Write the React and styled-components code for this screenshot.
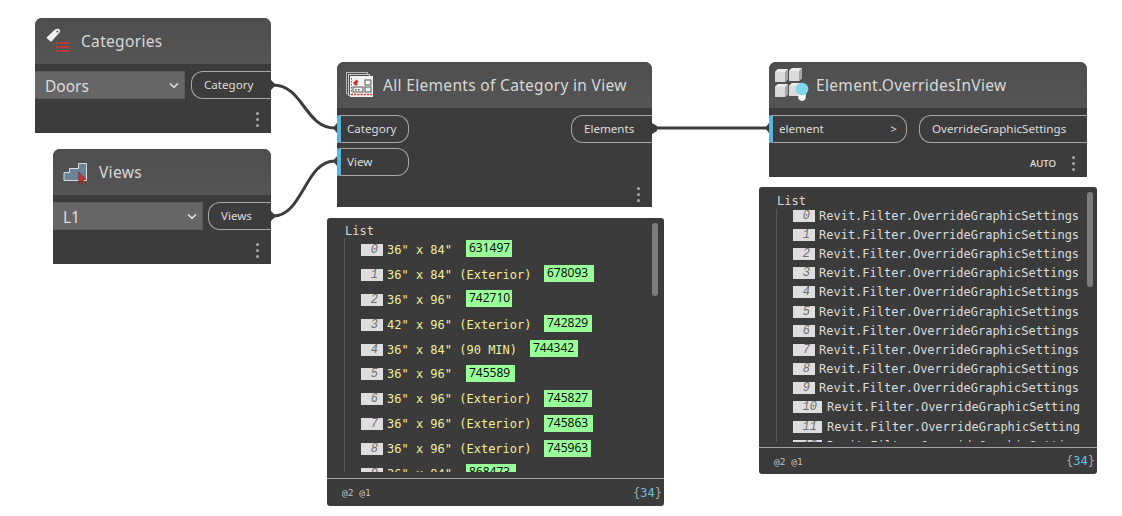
import React from "react";
import styled, { createGlobalStyle } from "styled-components";

const Global = createGlobalStyle`
  html, body { margin: 0; padding: 0; background: #fff; }
  #root { width: 1122px; height: 516px; overflow: hidden; }
`;

const UI = `"Noto Sans", "Open Sans", sans-serif`;
const MONO = `"DejaVu Sans Mono", "Liberation Mono", monospace`;

const Canvas = styled.div`
  position: relative;
  width: 1122px;
  height: 516px;
  background: #fff;
  font-family: ${UI};
`;

const WireLayer = styled.svg`
  position: absolute;
  left: 0;
  top: 0;
  z-index: 2;
  pointer-events: none;
`;

const Node = styled.section`
  position: absolute;
  left: ${(p) => p.$x}px;
  top: ${(p) => p.$y}px;
  width: ${(p) => p.$w}px;
  height: ${(p) => p.$h}px;
  display: flex;
  flex-direction: column;
  background: #3c3c3c;
  border-radius: 7px 7px 0 0;
`;

const Header = styled.header`
  height: 46px;
  flex: none;
  display: flex;
  align-items: center;
  gap: 5px;
  padding-left: ${(p) => p.$pad}px;
  background: linear-gradient(#4e4e4e, #555555);
  border-radius: 7px 7px 0 0;
  box-sizing: border-box;
`;

const IconSlot = styled.svg`
  flex: none;
  width: ${(p) => p.$w}px;
  height: 32px;
  overflow: visible;
`;

const Title = styled.h2`
  margin: 0;
  font-size: 15.5px;
  font-weight: 400;
  color: #d8d8d8;
  white-space: nowrap;
  letter-spacing: 0.32px;
`;

const Body = styled.div`
  flex: 1;
  display: flex;
  flex-direction: column;
  padding-top: 7px;
  min-height: 0;
`;

const PortRow = styled.div`
  display: flex;
  align-items: flex-start;
  height: 28px;
  margin-bottom: ${(p) => p.$mb || 0}px;
`;

const Dropdown = styled.div`
  flex: none;
  width: ${(p) => p.$w}px;
  height: 28px;
  box-sizing: border-box;
  background: #666666;
  border: 1px solid #5c5c5c;
  border-left: 0;
  display: flex;
  align-items: center;
  justify-content: space-between;
  padding: 2px 5px 0 10px;
  color: #dcdcdc;
  font-size: 15.5px;
`;

const Chevron = styled.svg`
  width: 10px;
  height: 7px;
  margin-top: -2px;
`;

const Output = styled.div`
  flex: none;
  margin-left: auto;
  width: ${(p) => p.$w}px;
  height: 28px;
  box-sizing: border-box;
  border: 1px solid #a8a8a8;
  border-right: 0;
  border-radius: 12px 0 0 12px;
  display: flex;
  align-items: center;
  padding: 0 0 2px 12px;
  font-size: 11.6px;
  color: #dedede;
  white-space: nowrap;
`;

const Input = styled.div`
  flex: none;
  width: ${(p) => p.$w}px;
  height: 28px;
  box-sizing: border-box;
  border: 1px solid #a8a8a8;
  border-left: 4px solid #58b5de;
  border-radius: 0 12px 12px 0;
  display: flex;
  align-items: center;
  justify-content: space-between;
  padding: 0 9px 2px 6px;
  font-size: 11.6px;
  color: #dedede;
  white-space: nowrap;
`;

const Foot = styled.div`
  margin-top: auto;
  height: ${(p) => p.$h}px;
  box-sizing: border-box;
  padding: 6px 12px 0 0;
  display: flex;
  align-items: center;
  justify-content: flex-end;
  gap: 16px;
`;

const Auto = styled.span`
  font-size: 9.6px;
  font-weight: 500;
  color: #e4e4e4;
`;

const Dots = styled.span`
  display: flex;
  flex-direction: column;
  gap: 3px;
  & > i {
    display: block;
    width: 3px;
    height: 3px;
    border-radius: 50%;
    background: #a8a8a8;
  }
`;

const Watch = styled.section`
  position: absolute;
  left: ${(p) => p.$x}px;
  top: ${(p) => p.$y}px;
  width: ${(p) => p.$w}px;
  height: ${(p) => p.$h}px;
  display: flex;
  flex-direction: column;
  background: #3b3b3b;
  border-radius: 3px;
  font-family: ${MONO};
`;

const WatchBody = styled.div`
  position: relative;
  flex: 1;
  min-height: 0;
  box-sizing: border-box;
  padding: ${(p) => p.$top}px 17px ${(p) => p.$bottom}px 17px;
  display: flex;
  flex-direction: column;
`;

const ListLabel = styled.div`
  flex: none;
  height: 16px;
  line-height: 16px;
  padding-left: 1px;
  font-size: 12px;
  color: #d6d6d6;
`;

const Tree = styled.div`
  flex: 1;
  min-height: 0;
  overflow: hidden;
  border-left: 1px solid #5a5a5a;
  padding-left: 16px;
`;

const RowStack = styled.div`
  margin-top: ${(p) => p.$offset}px;
`;

const Row = styled.div`
  display: flex;
  align-items: center;
  height: ${(p) => p.$h}px;
  white-space: nowrap;
`;

const Index = styled.span`
  flex: none;
  width: ${(p) => p.$w}px;
  height: 12px;
  box-sizing: border-box;
  background: #dedede;
  color: #6e6e6e;
  font-family: "Liberation Mono", monospace;
  font-size: 12px;
  font-style: italic;
  line-height: 12px;
  text-align: right;
  padding-right: 5px;
  margin-right: ${(p) => (p.$w > 22 ? 5 : 4)}px;
`;

const Value = styled.span`
  flex: none;
  font-size: 12px;
  color: ${(p) => (p.$plain ? "#dcdcdc" : "#eeee9e")};
  width: ${(p) => (p.$col ? `${p.$col}px` : "auto")};
`;

const Tag = styled.span`
  flex: none;
  box-sizing: border-box;
  width: ${(p) => p.$w}px;
  height: 17px;
  background: #99ff99;
  color: #000;
  font-family: "Open Sans", ${UI};
  font-size: 12px;
  line-height: 16px;
  padding-left: 3px;
  margin-top: -2px;
`;

const Scrollbar = styled.div`
  position: absolute;
  top: 5px;
  right: ${(p) => p.$right}px;
  width: 6px;
  height: ${(p) => p.$h}px;
  border-radius: 3px;
  background: #7d7d7d;
`;

const WatchFoot = styled.footer`
  flex: none;
  height: ${(p) => p.$h}px;
  box-sizing: border-box;
  border-top: 1px solid #a0a0a0;
  display: flex;
  align-items: center;
  justify-content: space-between;
  padding: 0 2px 0 15px;
  color: #bdbdbd;
`;

const Levels = styled.span`
  font-size: 9.5px;
  color: #c2c2c2;
`;

const Count = styled.span`
  font-size: 12px;
  color: #aaa;
  & > b {
    font-weight: 400;
    color: #6cc0e8;
  }
`;

const MoreDots = () => (
  <Dots>
    <i />
    <i />
    <i />
  </Dots>
);

const Caret = () => (
  <Chevron viewBox="0 0 10 7">
    <path d="M1 1.5 L5 5.2 L9 1.5" fill="none" stroke="#e8e8e8" strokeWidth="1.5" />
  </Chevron>
);

const CategoriesIcon = () => (
  <IconSlot $w={30} viewBox="0 0 30 32">
    <g transform="translate(-46 -25)">
      <path d="M47 37 L55 29.5 Q57 28.5 59 29 Q60.5 30 60 32 L52 41 Q51 42 50 41 L47 38.5 Q46.5 37.7 47 37 Z" fill="#f1f1f1" />
      <circle cx="57.4" cy="31.6" r="1" fill="#555" />
      <g fill="#b83a3a">
        <rect x="56" y="42" width="2.5" height="2" />
        <rect x="60" y="42" width="10" height="2" />
        <rect x="56" y="46" width="2.5" height="2" />
        <rect x="60" y="46" width="10" height="2" />
        <rect x="56" y="50" width="2.5" height="2" />
        <rect x="60" y="50" width="10" height="2" />
      </g>
    </g>
  </IconSlot>
);

const ViewsIcon = () => (
  <IconSlot $w={32} viewBox="0 0 32 32">
    <g transform="translate(-62 -156)">
      <path d="M64 180.5 V172.5 L69.5 172.5 V168.5 L78.5 168.5 V163.5 H86.5 V180.5 Z" fill="#6b8399" stroke="#d9dde0" strokeWidth="1" />
      <path d="M78.5 172 L86 179 L83 179.6 L85.5 183.5 L83.5 184.5 L81 180.8 L78.8 183 Z" fill="#c9302c" stroke="#3a2020" strokeWidth="0.4" />
    </g>
  </IconSlot>
);

const AllElementsIcon = () => (
  <IconSlot $w={32} viewBox="0 0 32 32">
    <g transform="translate(-346 -69)">
      <rect x="346.5" y="72.5" width="21" height="21" fill="#4a4a4a" stroke="#b8b8b8" />
      <rect x="348.5" y="74.5" width="21" height="21" fill="#4a4a4a" stroke="#c8c8c8" />
      <rect x="350" y="76" width="23" height="21" fill="#f2f2f2" />
      <path d="M353 83 L356.5 79.5 L358.5 81.5 L355 85 Z" fill="#c9302c" />
      <circle cx="356" cy="84" r="1.6" fill="#c9302c" />
      <rect x="353" y="87" width="10" height="5" fill="none" stroke="#555" strokeWidth="1" />
      <rect x="355" y="89" width="1.5" height="1.5" fill="#555" />
      <rect x="358" y="89" width="1.5" height="1.5" fill="#555" />
      <rect x="365" y="80" width="6" height="5" fill="none" stroke="#555" strokeWidth="1" />
      <rect x="365" y="87" width="6" height="5" fill="none" stroke="#555" strokeWidth="1" />
      <path d="M351 94.5 H372" stroke="#c9302c" strokeWidth="1.4" strokeDasharray="2 1.2" />
      <path d="M351.5 78 V93" stroke="#c9302c" strokeWidth="1" strokeDasharray="1.5 1.5" />
    </g>
  </IconSlot>
);

const Cube = ({ x, y }) => (
  <g>
    <path d={`M${x} ${y + 3} L${x + 3} ${y} H${x + 13} V${y + 10} L${x + 10} ${y + 13} H${x} Z`} fill="#cfcfcf" />
    <path d={`M${x} ${y + 3} L${x + 3} ${y} H${x + 13} L${x + 10} ${y + 3} Z`} fill="#ececec" />
    <path d={`M${x + 10} ${y + 3} L${x + 13} ${y} V${y + 10} L${x + 10} ${y + 13} Z`} fill="#a5a5a5" />
    <rect x={x} y={y + 3} width="10" height="10" fill="#dadada" />
  </g>
);

const OverridesIcon = () => (
  <IconSlot $w={38} viewBox="0 0 38 32">
    <g transform="translate(-773 -69)">
      <Cube x={775} y={69} />
      <Cube x={789} y={68} />
      <Cube x={775} y={84} />
      <Cube x={789} y={83} />
      <path d="M798 94 H806 L805.5 99 Q802 103 798.5 99 Z" fill="#f8f8f8" />
      <circle cx="802" cy="89" r="6.3" fill="#7ed8ea" />
    </g>
  </IconSlot>
);

const doorRows = [
  { t: `36" x 84"`, col: 79, w: 46, id: "631497" },
  { t: `36" x 84" (Exterior)`, col: 157, w: 50, id: "678093" },
  { t: `36" x 96"`, col: 79, w: 46, id: "742710" },
  { t: `42" x 96" (Exterior)`, col: 157, w: 48, id: "742829" },
  { t: `36" x 84" (90 MIN)`, col: 143, w: 48, id: "744342" },
  { t: `36" x 96"`, col: 79, w: 49, id: "745589" },
  { t: `36" x 96" (Exterior)`, col: 157, w: 48, id: "745827" },
  { t: `36" x 96" (Exterior)`, col: 157, w: 49, id: "745863" },
  { t: `36" x 96" (Exterior)`, col: 157, w: 47, id: "745963" },
  { t: `36" x 84"`, col: 79, w: 50, id: "868473" },
];

const overrideRows = Array.from({ length: 13 }, (_, i) => i);

const Wire = ({ d }) => <path d={d} fill="none" stroke="#3c3c3c" strokeWidth="3" strokeLinecap="round" />;

export default function App() {
  return (
    <Canvas>
      <Global />

      <Node $x={35} $y={18} $w={236} $h={115}>
        <Header $pad={11}>
          <CategoriesIcon />
          <Title>Categories</Title>
        </Header>
        <Body>
          <PortRow>
            <Dropdown $w={150}>
              Doors
              <Caret />
            </Dropdown>
            <Output $w={80}>Category</Output>
          </PortRow>
          <Foot $h={34}>
            <MoreDots />
          </Foot>
        </Body>
      </Node>

      <Node $x={53} $y={149} $w={218} $h={115}>
        <Header $pad={9}>
          <ViewsIcon />
          <Title>Views</Title>
        </Header>
        <Body>
          <PortRow>
            <Dropdown $w={150}>
              L1
              <Caret />
            </Dropdown>
            <Output $w={63}>Views</Output>
          </PortRow>
          <Foot $h={34}>
            <MoreDots />
          </Foot>
        </Body>
      </Node>

      <Node $x={337} $y={62} $w={315} $h={145}>
        <Header $pad={9}>
          <AllElementsIcon />
          <Title>All Elements of Category in View</Title>
        </Header>
        <Body>
          <PortRow $mb={5}>
            <Input $w={72}>Category</Input>
            <Output $w={81}>Elements</Output>
          </PortRow>
          <PortRow>
            <Input $w={72}>View</Input>
          </PortRow>
          <Foot $h={31}>
            <MoreDots />
          </Foot>
        </Body>
      </Node>

      <Node $x={769} $y={62} $w={318} $h={115}>
        <Header $pad={4}>
          <OverridesIcon />
          <Title>Element.OverridesInView</Title>
        </Header>
        <Body>
          <PortRow>
            <Input $w={138}>
              element<span>&gt;</span>
            </Input>
            <Output $w={168}>OverrideGraphicSettings</Output>
          </PortRow>
          <Foot $h={34}>
            <Auto>AUTO</Auto>
            <MoreDots />
          </Foot>
        </Body>
      </Node>

      <Watch $x={327} $y={218} $w={337} $h={288}>
        <WatchBody $top={5} $bottom={6}>
          <ListLabel>List</ListLabel>
          <Tree>
            <RowStack $offset={-1.5}>
              {doorRows.map((r, i) => (
                <Row key={r.id} $h={24.9}>
                  <Index $w={22}>{i}</Index>
                  <Value $col={r.col}>{r.t}</Value>
                  <Tag $w={r.w}>{r.id}</Tag>
                </Row>
              ))}
            </RowStack>
          </Tree>
          <Scrollbar $h={73} $right={6} />
        </WatchBody>
        <WatchFoot $h={28}>
          <Levels>@2 @1</Levels>
          <Count>
            {"{"}
            <b>34</b>
            {"}"}
          </Count>
        </WatchFoot>
      </Watch>

      <Watch $x={759} $y={187} $w={338} $h={287}>
        <WatchBody $top={6} $bottom={5}>
          <ListLabel>List</ListLabel>
          <Tree>
            <RowStack $offset={-3}>
              {overrideRows.map((i) => (
                <Row key={i} $h={19.2}>
                  <Index $w={i > 9 ? 29 : 22}>{i}</Index>
                  <Value $plain>Revit.Filter.OverrideGraphicSettings</Value>
                </Row>
              ))}
            </RowStack>
          </Tree>
          <Scrollbar $h={95} $right={4} />
        </WatchBody>
        <WatchFoot $h={27}>
          <Levels>@2 @1</Levels>
          <Count>
            {"{"}
            <b>34</b>
            {"}"}
          </Count>
        </WatchFoot>
      </Watch>

      <WireLayer width="1122" height="516" viewBox="0 0 1122 516">
        <Wire d="M273 85 C 303 85, 305 128, 335 128" />
        <Wire d="M273 216 C 303 216, 305 161, 335 161" />
        <Wire d="M654 128 H767" />
        <g fill="#3c3c3c">
          <path d="M271 80 L276 85 L271 90 Z" />
          <path d="M271 211 L276 216 L271 221 Z" />
          <path d="M652 123 L657 126 V131 L652 134 Z" />
          <path d="M337 123 L333 128 L337 133 Z" />
          <path d="M337 156 L333 161 L337 166 Z" />
          <path d="M769 123 L765 128 L769 133 Z" />
        </g>
      </WireLayer>
    </Canvas>
  );
}
